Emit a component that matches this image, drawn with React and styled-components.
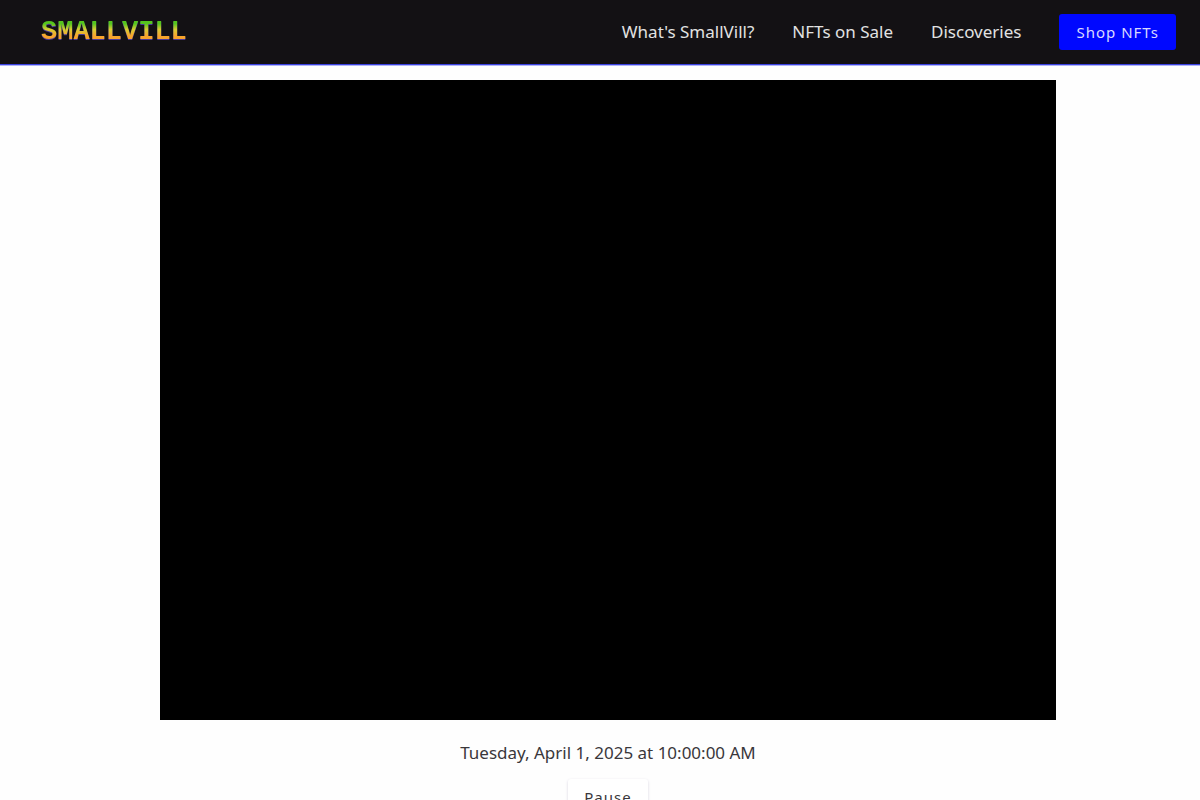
import React, { useState } from "react";
import styled, { createGlobalStyle } from "styled-components";

const GlobalStyle = createGlobalStyle`
  * {
    box-sizing: border-box;
  }
  body {
    margin: 0;
    background: #fefefe;
    color: #3a373b;
    font-family: "Noto Sans", "Open Sans", sans-serif;
    font-size: 17px;
    line-height: 24px;
    overflow: hidden;
  }
`;

// Top bar
const Header = styled.header`
  display: flex;
  align-items: center;
  justify-content: space-between;
  padding: 14px 24px 14px 41px;
  background-color: #131114;
  border-bottom: 1px solid #3a42e0;
  box-shadow: 0 1px 0 #b0b3f5;
`;

const Logo = styled.a`
  font-family: "Liberation Mono", monospace;
  font-size: 27px;
  line-height: 32px;
  font-weight: 700;
  text-decoration: none;
  color: transparent;
  background: linear-gradient(#55c51e 24%, #d8cc34 42%, #f7a42c 62%);
  background-clip: text;
  -webkit-background-clip: text;
  filter: drop-shadow(0 1px 0 #4a3a9c);
`;

const Nav = styled.nav`
  display: flex;
  align-items: center;
  gap: 38px;
`;

const NavItem = styled.a`
  color: #e2e2e2;
  text-decoration: none;
  &:hover {
    color: gray;
  }
`;

const Button = styled.button`
  height: 36px;
  padding: 0 16px;
  border: none;
  border-radius: 3px;
  font-family: inherit;
  font-size: 15px;
  font-weight: 400;
  letter-spacing: 1px;
  cursor: pointer;
`;

const ShopButton = styled(Button)`
  padding: 0 17px;
  color: #d8d8ff;
  background-color: #0008ff;
`;

const PauseButton = styled(Button)`
  color: #3a373b;
  background-color: white;
  box-shadow: 0 1px 3px #d8d4e0;
`;

// The game and its controls
const Main = styled.main`
  display: flex;
  flex-direction: column;
  align-items: center;
  padding: 15px 0 16px 16px;
`;

const Screen = styled.canvas`
  display: block;
  max-width: 100%;
  background-color: black;
`;

const Clock = styled.time`
  margin: 21px 0 14px;
`;

const App = () => {
  const [paused, setPaused] = useState(false);

  return (
    <>
      <GlobalStyle />
      <Header>
        <Logo href="#home">SMALLVILL</Logo>
        <Nav>
          <NavItem href="#about">What's SmallVill?</NavItem>
          <NavItem href="#sale">NFTs on Sale</NavItem>
          <NavItem href="#discoveries">Discoveries</NavItem>
          <ShopButton type="button">Shop NFTs</ShopButton>
        </Nav>
      </Header>
      <Main>
        <Screen width="896" height="640" />
        <Clock dateTime="2025-04-01T10:00:00">
          Tuesday, April 1, 2025 at 10:00:00 AM
        </Clock>
        <PauseButton type="button" onClick={() => setPaused(!paused)}>
          {paused ? "Play" : "Pause"}
        </PauseButton>
      </Main>
    </>
  );
};

export default App;
